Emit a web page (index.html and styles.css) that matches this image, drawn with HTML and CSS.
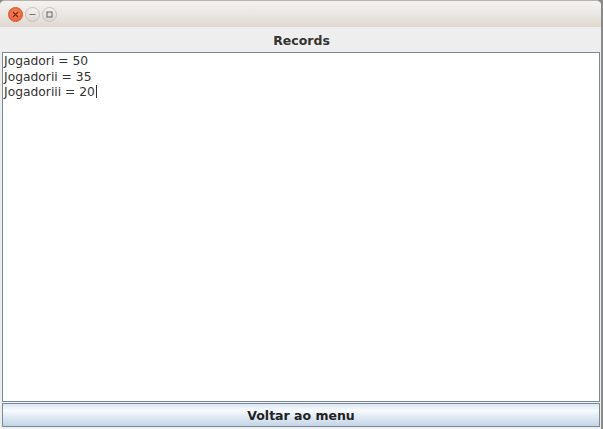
FILE: index.html
```html
<!DOCTYPE html>
<html>
<head>
<meta charset="utf-8">
<link rel="stylesheet" href="styles.css">
</head>
<body>
<div class="window">
  <div class="titlebar">
    <span class="wbtn close"><svg width="9" height="9" viewBox="0 0 9 9"><path d="M2 2L7 7M7 2L2 7" stroke="#7a2a12" stroke-width="1.2"/></svg></span>
    <span class="wbtn"><svg width="9" height="9" viewBox="0 0 9 9"><path d="M1.5 4.5H7.5" stroke="#777" stroke-width="1.2"/></svg></span>
    <span class="wbtn"><svg width="9" height="9" viewBox="0 0 9 9"><rect x="2" y="2" width="5" height="5" fill="none" stroke="#777" stroke-width="1.2"/></svg></span>
  </div>
  <div class="content">
    <div class="label">Records</div>
    <div class="textarea">
      <div>Jogadori = 50</div>
      <div>Jogadorii = 35</div>
      <div>Jogadoriii = 20<span class="caret"></span></div>
    </div>
    <div class="button">Voltar ao menu</div>
  </div>
</div>
</body>
</html>
```
FILE: styles.css
```css
html, body { margin: 0; padding: 0; }
body { width: 603px; height: 429px; overflow: hidden; background: #8a8a8a; font-family: "DejaVu Sans", sans-serif; }
.window { width: 601px; height: 429px; display: flex; flex-direction: column; background: #eeeeee; border-radius: 5px 5px 0 0; overflow: hidden; border-top: 1px solid #b8b4b0; box-sizing: border-box; }
.titlebar { height: 26px; flex: none; background: linear-gradient(#f4f2ef, #ebe7e3 50%, #e0d8d1); display: flex; align-items: center; padding-left: 8px; gap: 2px; box-sizing: border-box; padding-top: 1px; }
.wbtn { width: 15px; height: 15px; box-sizing: border-box; border-radius: 50%; background: linear-gradient(#f4f2f0, #dcd8d4); border: 1px solid #c6c1bc; display: flex; align-items: center; justify-content: center; }
.close { background: radial-gradient(circle at 50% 40%, #f8875a, #e9592b); border-color: #d4542a; }
.content { flex: 1; display: flex; flex-direction: column; padding: 0 0 0 2px; }
.label { height: 25px; flex: none; display: flex; align-items: center; justify-content: center; font-weight: bold; font-size: 12.5px; color: #333; padding-top: 1px; box-sizing: border-box; }
.textarea { flex: 1; background: #fff; border: 1px solid #7a8a99; margin-right: 1px; padding: 1px 1px; font-size: 12.3px; color: #333; line-height: 15.5px; }
.caret { display: inline-block; width: 1px; height: 13px; background: #333; vertical-align: -2px; margin-left: 1px; }
.button { height: 24px; flex: none; margin: 1px 1px 2px 0; border: 1px solid #7a8a99; background: linear-gradient(#dbe6f2, #f8fbfe 30%, #e3ecf5 55%, #c4d5e7); display: flex; align-items: center; justify-content: center; font-weight: bold; font-size: 12.5px; color: #222; box-sizing: border-box; }
```
